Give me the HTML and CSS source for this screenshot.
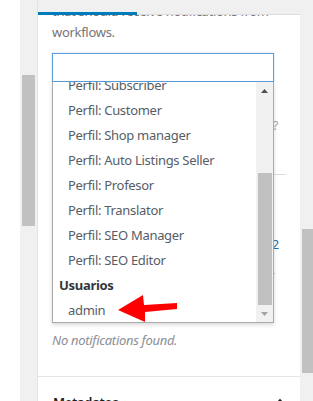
FILE: index.html
```html
<!DOCTYPE html>
<html lang="es">
<head>
  <meta charset="UTF-8" />
  <title>Notificaciones</title>
  <link rel="stylesheet" href="styles.css">
</head>
<body>

<div class="screen">
  <div class="edge"></div>

  <div class="gutter gutter-left">
    <div class="thumb"></div>
  </div>

  <div class="panel">
    <div class="tabs">
      <div class="tab"></div>
    </div>

    <div class="panel-body">
      <p class="help">that should receive notifications from<br>workflows.</p>

      <div class="field">
        <div class="selection"></div>

        <div class="dropdown">
          <ul class="options">
            <li>Perfil: Subscriber</li>
            <li>Perfil: Customer</li>
            <li>Perfil: Shop manager</li>
            <li>Perfil: Auto Listings Seller</li>
            <li>Perfil: Profesor</li>
            <li>Perfil: Translator</li>
            <li>Perfil: SEO Manager</li>
            <li>Perfil: SEO Editor</li>
            <li class="group">Usuarios</li>
            <li>admin</li>
          </ul>
          <div class="scrollbar">
            <div class="scroll-btn">
              <svg width="7" height="4" viewBox="0 0 7 4"><polygon points="0,4 3.5,0 7,4" fill="#505050"/></svg>
            </div>
            <div class="track"><div class="thumb"></div></div>
            <div class="scroll-btn">
              <svg width="7" height="4" viewBox="0 0 7 4"><polygon points="0,0 7,0 3.5,4" fill="#a3a3a3"/></svg>
            </div>
          </div>
        </div>

        <div class="under">
          <span class="under-help">?</span>
          <div class="under-rule"></div>
          <a class="under-link">2</a>
          <span class="under-dot"></span>
        </div>
      </div>

      <p class="empty">No notifications found.</p>
    </div>

    <div class="section-head">
      <span>Metadatos</span>
      <svg width="12" height="8" viewBox="0 0 12 8"><path d="M1 7 L6 2 L11 7" fill="none" stroke="#1e1e1e" stroke-width="1.6"/></svg>
    </div>
  </div>

  <div class="gutter gutter-right">
    <div class="thumb"></div>
  </div>
</div>

<!-- annotation arrow drawn over the screenshot -->
<svg class="annot" width="313" height="401" viewBox="0 0 313 401">
  <polygon points="118,310 143,295 144,305 177,303 177,309 145,312 145,322" fill="#f00"/>
</svg>

</body>
</html>
```

FILE: styles.css
```css
body {
  margin: 0;
  font-family: "Noto Sans", sans-serif;
  font-size: 13px;
  letter-spacing: -0.3px;
  position: relative;
}

.screen {
  display: flex;
  height: 401px;
  overflow: hidden;
  background: #fff;
}

.edge {
  width: 20px;
  background: #fff;
}

.gutter {
  background: #f0f0f1;
  box-sizing: border-box;
  flex-shrink: 0;
}

.gutter .thumb {
  background: #c1c1c1;
}

.gutter-left {
  width: 17px;
  padding: 75px 2px 0;
}

.gutter-left .thumb {
  height: 151px;
}

.gutter-right {
  width: 13px;
  padding: 229px 0 0 2px;
}

.gutter-right .thumb {
  height: 144px;
}

.panel {
  width: 263px;
  flex-shrink: 0;
  border-left: 1px solid #e2e4e7;
  box-sizing: border-box;
  display: flex;
  flex-direction: column;
}

.tabs {
  position: relative;
  z-index: 3;
  height: 15px;
  flex-shrink: 0;
  display: flex;
  background: #f0f0f1;
  box-shadow: inset 0 -1px #dcdcde;
}

.tab {
  width: 99px;
  box-shadow: inset 0 -3px #007cba;
}

.panel-body {
  margin-top: -14px;
  padding: 0 14px;
}

.help {
  margin: 0;
  color: #757575;
  line-height: 21px;
  white-space: nowrap;
}

.field {
  position: relative;
  margin-top: 10px;
}

.selection {
  width: 222px;
  height: 29px;
  box-sizing: border-box;
  border: 1px solid #5b9dd9;
  box-shadow: 0 0 2px rgba(91, 157, 217, 0.4);
}

.dropdown {
  position: absolute;
  z-index: 2;
  top: 29px;
  left: 0;
  width: 222px;
  height: 241px;
  box-sizing: border-box;
  border: 1px solid #aaa;
  border-top: 0;
  background: #fff;
  display: flex;
  box-shadow: 0 2px 4px rgba(0, 0, 0, 0.15);
}

.options {
  flex: 1;
  overflow: hidden;
  list-style: none;
  margin: 0;
  padding: 0;
}

.options li {
  line-height: 25px;
  padding-left: 15px;
  color: #555d66;
  white-space: nowrap;
}

.options li:first-child {
  margin-top: -9px;
}

.options .group {
  padding-left: 6px;
  font-weight: bold;
  color: #32373c;
}

.scrollbar {
  width: 17px;
  flex-shrink: 0;
  background: #f1f1f1;
  display: flex;
  flex-direction: column;
}

.scroll-btn {
  height: 17px;
  display: flex;
  align-items: center;
  justify-content: center;
}

.track {
  flex: 1;
  padding: 74px 1px 0 2px;
  display: flex;
  flex-direction: column;
}

.track .thumb {
  flex: 1;
  background: #c1c1c1;
}

.under {
  height: 248px;
  display: flex;
  flex-direction: column;
}

.under-help {
  align-self: flex-end;
  margin: 37px 8px 0 0;
  line-height: 13px;
  color: #a7aaad;
}

.under-rule {
  margin-top: 42px;
  border-top: 1px solid #dcdcde;
}

.under-link {
  align-self: flex-end;
  margin: 63px 7px 0 0;
  line-height: 13px;
  color: #2271b1;
}

.under-dot {
  align-self: flex-end;
  width: 1px;
  height: 1px;
  margin: 22px 11px 0 0;
  background: #bbb;
}

.empty {
  margin: 0 0 25px;
  line-height: 21px;
  font-style: italic;
  color: #8c8f94;
}

.section-head {
  border-top: 1px solid #e2e4e7;
  padding: 15px 14px 0 15px;
  display: flex;
  justify-content: space-between;
  align-items: center;
  line-height: 20px;
  font-weight: 600;
  color: #1e1e1e;
}

.annot {
  position: absolute;
  z-index: 10;
  left: 0;
  top: 0;
  pointer-events: none;
}
```
